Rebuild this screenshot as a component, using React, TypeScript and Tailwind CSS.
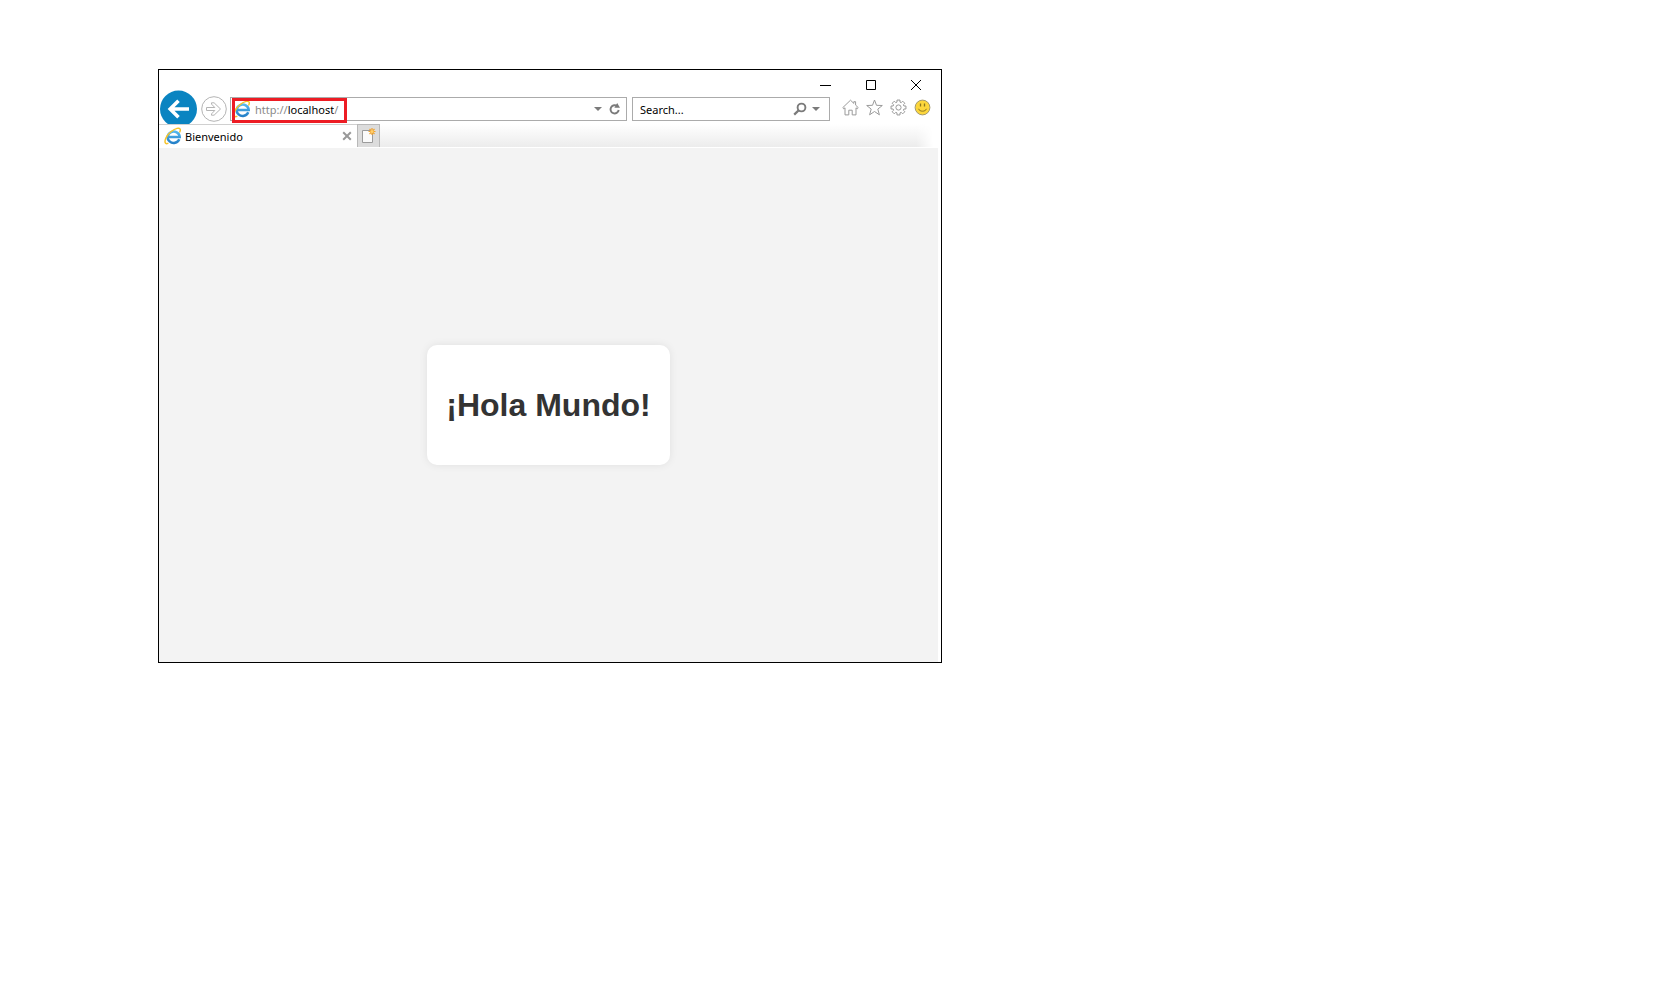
import React from "react";

function IeLogo() {
  return (
    <svg width="18" height="18" viewBox="0 0 18 18" fill="none" aria-hidden="true" className="shrink-0">
      <defs>
        <linearGradient id="ie-blue" x1="0" y1="3" x2="0" y2="16" gradientUnits="userSpaceOnUse">
          <stop offset="0" stopColor="#5cc0f2" />
          <stop offset="1" stopColor="#2480c8" />
        </linearGradient>
      </defs>
      <path d="M15.300 12.300A6 5.700 0 1 1 15.700 9.900H5" stroke="url(#ie-blue)" strokeWidth="2.500" />
      <path
        d="M3.800 16.400C1 17.500 .3 14.800 1.800 11.200 3.800 6.600 8.800 2.600 13 1.400 16 .6 17 2.200 15.800 5"
        stroke="#f5c32c"
        strokeWidth="1.500"
        strokeLinecap="round"
      />
    </svg>
  );
}

function Caret() {
  return (
    <svg width="8" height="4" viewBox="0 0 8 4" aria-hidden="true">
      <path d="M0 0h8L4 4z" fill="#7b7b7b" />
    </svg>
  );
}

function TitleBar() {
  return (
    <div className="flex h-[27px] items-center justify-end gap-[34px] pr-5 pt-[3px]">
      <button type="button" aria-label="Minimize">
        <svg width="11" height="10" viewBox="0 0 11 10" className="block">
          <path d="M0 5.500h11" stroke="#000" />
        </svg>
      </button>
      <button type="button" aria-label="Maximize">
        <svg width="11" height="10" viewBox="0 0 11 10" className="block">
          <path d="M1.500.5h9v9h-9z" fill="none" stroke="#000" />
        </svg>
      </button>
      <button type="button" aria-label="Close">
        <svg width="11" height="10" viewBox="0 0 11 10" className="block">
          <path d="M1 0l10 10M11 0L1 10" stroke="#000" />
        </svg>
      </button>
    </div>
  );
}

function AddressBar() {
  return (
    <div className="relative flex h-6 min-w-0 flex-1 items-center border border-[#ababab] pl-0.5 pr-[5px]">
      <IeLogo />
      <label htmlFor="address" className="ml-1 shrink-0 pt-0.5 text-[#8a8a8a]">
        http://
      </label>
      <input
        id="address"
        defaultValue="localhost"
        className="field-sizing-content min-w-0 bg-transparent p-0 pt-0.5 text-black outline-none"
      />
      <span className="flex-1 pt-0.5 text-[#8a8a8a]">/</span>
      <button type="button" aria-label="Show address history" className="mr-[7px]">
        <Caret />
      </button>
      <button type="button" aria-label="Refresh">
        <svg width="12" height="12" viewBox="0 0 12 12" fill="none" className="block">
          <path d="M8.400 3.300A4.100 4.100 0 1 0 9.700 7" stroke="#7b7b7b" strokeWidth="1.900" />
          <path d="M5.400 4.800h5.600L8.200 0z" fill="#7b7b7b" />
        </svg>
      </button>
      <span className="pointer-events-none absolute left-px top-0 h-[25px] w-[115px] border-3 border-[#ed1c24]" />
    </div>
  );
}

function SearchBox() {
  return (
    <div className="ml-[5px] flex h-6 w-[198px] shrink-0 items-center border border-[#ababab] pl-[7px] pr-[9px]">
      <input
        aria-label="Search"
        placeholder="Search..."
        className="min-w-0 flex-1 bg-transparent p-0 pt-0.5 outline-none placeholder:text-black"
      />
      <button type="button" aria-label="Run search" className="mr-[5px]">
        <svg width="14" height="14" viewBox="0 0 14 14" fill="none" className="block">
          <circle cx="8.500" cy="5.500" r="3.900" stroke="#7b7b7b" strokeWidth="1.900" />
          <path d="M5.600 8.400L1.200 12.600" stroke="#7b7b7b" strokeWidth="2.200" />
        </svg>
      </button>
      <button type="button" aria-label="Search options">
        <Caret />
      </button>
    </div>
  );
}

function gearPath() {
  const points: string[] = [];
  for (let i = 0; i < 8; i++) {
    const steps: [number, number][] = [
      [-0.27, 5.6],
      [-0.2, 7.6],
      [0.2, 7.6],
      [0.27, 5.6],
    ];
    for (const [offset, radius] of steps) {
      const angle = (i * Math.PI) / 4 + offset;
      points.push(`${(8.5 + radius * Math.cos(angle)).toFixed(2)} ${(8.5 + radius * Math.sin(angle)).toFixed(2)}`);
    }
  }
  return `M${points.join("L")}Z`;
}

function Tools() {
  return (
    <div className="flex shrink-0 items-center gap-[7px] pb-[3px] pl-3 pr-[10px]">
      <button type="button" aria-label="Home">
        <svg width="17" height="17" viewBox="0 0 17 17" fill="none" stroke="#9a9a9a" strokeLinejoin="round" className="block">
          <path d="M8.500 1.200L.8 8.600l1 1.200 1.200-1v7.100h3.800v-4.700h3.400v4.700H14V8.800l1.200 1 1-1.200-2.600-2.500V2.700h-1.800v1.700z" />
        </svg>
      </button>
      <button type="button" aria-label="Favorites">
        <svg width="17" height="17" viewBox="0 0 17 17" fill="none" stroke="#9a9a9a" className="block">
          <path d="M8.500 1l2 5.300 5.800.2-4.500 3.600 1.600 5.700-4.900-3.300-4.900 3.300 1.600-5.700L.7 6.500l5.800-.2z" />
        </svg>
      </button>
      <button type="button" aria-label="Settings">
        <svg width="17" height="17" viewBox="0 0 17 17" fill="none" stroke="#9a9a9a" strokeLinejoin="round" className="block">
          <path d={gearPath()} />
          <circle cx="8.500" cy="8.500" r="2.600" />
        </svg>
      </button>
      <button type="button" aria-label="Send feedback">
        <svg width="17" height="17" viewBox="0 0 17 17" fill="none" className="block">
          <circle cx="8.500" cy="8.500" r="7.400" fill="#fcd63c" stroke="#a39a72" />
          <path d="M6.500 4.500v3M10.500 4.500v3" stroke="#8a741f" strokeWidth="1.300" />
          <path d="M4.500 9.800c1.200 3.200 6.800 3.200 8 0" stroke="#8a741f" />
        </svg>
      </button>
    </div>
  );
}

function NavigationBar() {
  return (
    <div className="flex h-6 items-center">
      <button type="button" aria-label="Back" className="shrink-0">
        <svg width="38" height="38" viewBox="0 0 38 38" fill="none" className="block">
          <circle cx="19.500" cy="19" r="18.500" fill="#0a84c1" />
          <path d="M30 19H12M19.500 10.700L11.200 19l8.300 8.300" stroke="#fff" strokeWidth="3.600" />
        </svg>
      </button>
      <button type="button" aria-label="Forward" className="ml-1 mr-[3px] shrink-0">
        <svg width="26" height="26" viewBox="0 0 26 26" fill="none" stroke="#b4b4b4" className="block">
          <circle cx="13" cy="13" r="12.300" />
          <path d="M5.500 11.500h8.300l-3.300-3.400V6.800h2.600l6.400 6.200-6.400 6.200h-2.600v-1.300l3.300-3.400H5.500z" />
        </svg>
      </button>
      <AddressBar />
      <SearchBox />
      <Tools />
    </div>
  );
}

function TabStrip() {
  return (
    <div className="relative mt-[3px] flex h-[23px]">
      <div className="flex w-[198px] items-center border-t border-[#d0d0d0] bg-white px-[5px]">
        <IeLogo />
        <span className="ml-[3px] flex-1 pt-0.5">Bienvenido</span>
        <button type="button" aria-label="Close tab">
          <svg width="10" height="10" viewBox="0 0 10 10" className="block">
            <path d="M1.200 1.200l7.600 7.600M8.800 1.200L1.200 8.800" stroke="#999" strokeWidth="2" />
          </svg>
        </button>
      </div>
      <button
        type="button"
        aria-label="New tab"
        className="flex w-[23px] items-center justify-center border border-b-0 border-[#b9b9b9] bg-[#dcdcdc]"
      >
        <svg width="15" height="16" viewBox="0 0 15 16" fill="none">
          <path d="M1.500 2.500h10v12h-10z" fill="#fafafa" stroke="#9b9b9b" />
          <path d="M11 0v7M7.500 3.500h7M8.500 1l5 5M13.500 1l-5 5" stroke="#f0a22e" strokeWidth="1.200" />
          <circle cx="11" cy="3.500" r="1.500" fill="#ffcf6b" />
        </svg>
      </button>
      <div className="mr-2 flex-1 bg-linear-to-b from-white to-[#ececec] mask-r-from-97%" />
    </div>
  );
}

export default function App() {
  return (
    <div className="min-h-screen bg-white pl-[158px] pt-[69px]">
      <section className="w-full max-w-[784px] border border-black bg-white font-['Noto_Sans','Open_Sans',sans-serif] text-[11px] leading-4 text-black">
        <TitleBar />
        <NavigationBar />
        <TabStrip />
        <main className="mr-[3px] mt-px flex min-h-[514px] items-center justify-center bg-[#f3f3f3]">
          <div className="rounded-[10px] bg-white px-[19px] py-[41px] shadow-[0_0_8px_rgba(0,0,0,0.08)]">
            <h1 className="font-['Liberation_Sans',Arial,sans-serif] text-[32px] font-bold leading-[38px] text-[#333]">
              ¡Hola Mundo!
            </h1>
          </div>
        </main>
      </section>
    </div>
  );
}
